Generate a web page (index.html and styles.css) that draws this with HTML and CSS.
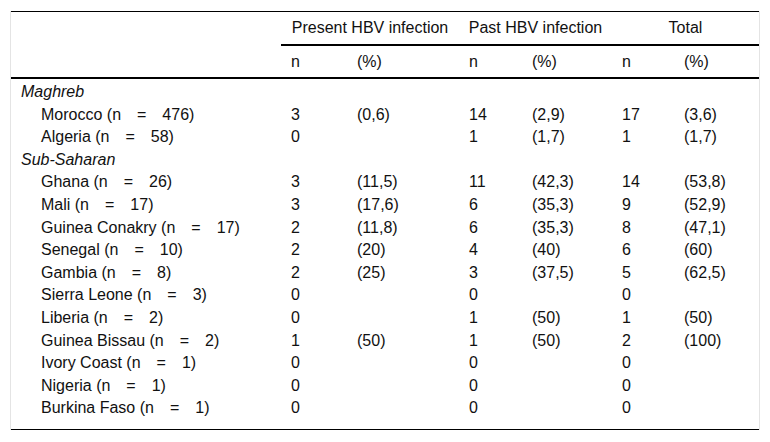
FILE: index.html
```html
<!DOCTYPE html>
<html>
<head>
<meta charset="utf-8">
<link rel="stylesheet" href="styles.css">
</head>
<body>
<div class="wrap">
<table class="tbl">
<colgroup>
<col class="c-label"><col class="c-n1"><col class="c-p1"><col class="c-n2"><col class="c-p2"><col class="c-n3"><col class="c-p3">
</colgroup>
<thead>
<tr class="h1">
<th></th>
<th colspan="2" class="grp">Present HBV infection</th>
<th colspan="2" class="grp">Past HBV infection</th>
<th colspan="2" class="grp">Total</th>
</tr>
<tr class="h2">
<th></th><th>n</th><th>(%)</th><th>n</th><th>(%)</th><th>n</th><th>(%)</th>
</tr>
</thead>
<tbody>
<tr class="first"><td class="region">Maghreb</td><td></td><td></td><td></td><td></td><td></td><td></td></tr>
<tr><td class="country">Morocco (n&emsp;=&emsp;476)</td><td>3</td><td>(0,6)</td><td>14</td><td>(2,9)</td><td>17</td><td>(3,6)</td></tr>
<tr><td class="country">Algeria (n&emsp;=&emsp;58)</td><td>0</td><td></td><td>1</td><td>(1,7)</td><td>1</td><td>(1,7)</td></tr>
<tr><td class="region">Sub-Saharan</td><td></td><td></td><td></td><td></td><td></td><td></td></tr>
<tr><td class="country">Ghana (n&emsp;=&emsp;26)</td><td>3</td><td>(11,5)</td><td>11</td><td>(42,3)</td><td>14</td><td>(53,8)</td></tr>
<tr><td class="country">Mali (n&emsp;=&emsp;17)</td><td>3</td><td>(17,6)</td><td>6</td><td>(35,3)</td><td>9</td><td>(52,9)</td></tr>
<tr><td class="country">Guinea Conakry (n&emsp;=&emsp;17)</td><td>2</td><td>(11,8)</td><td>6</td><td>(35,3)</td><td>8</td><td>(47,1)</td></tr>
<tr><td class="country">Senegal (n&emsp;=&emsp;10)</td><td>2</td><td>(20)</td><td>4</td><td>(40)</td><td>6</td><td>(60)</td></tr>
<tr><td class="country">Gambia (n&emsp;=&emsp;8)</td><td>2</td><td>(25)</td><td>3</td><td>(37,5)</td><td>5</td><td>(62,5)</td></tr>
<tr><td class="country">Sierra Leone (n&emsp;=&emsp;3)</td><td>0</td><td></td><td>0</td><td></td><td>0</td><td></td></tr>
<tr><td class="country">Liberia (n&emsp;=&emsp;2)</td><td>0</td><td></td><td>1</td><td>(50)</td><td>1</td><td>(50)</td></tr>
<tr><td class="country">Guinea Bissau (n&emsp;=&emsp;2)</td><td>1</td><td>(50)</td><td>1</td><td>(50)</td><td>2</td><td>(100)</td></tr>
<tr><td class="country">Ivory Coast (n&emsp;=&emsp;1)</td><td>0</td><td></td><td>0</td><td></td><td>0</td><td></td></tr>
<tr><td class="country">Nigeria (n&emsp;=&emsp;1)</td><td>0</td><td></td><td>0</td><td></td><td>0</td><td></td></tr>
<tr class="last"><td class="country">Burkina Faso (n&emsp;=&emsp;1)</td><td>0</td><td></td><td>0</td><td></td><td>0</td><td></td></tr>
</tbody>
</table>
</div>
</body>
</html>
```

FILE: styles.css
```css
html, body {
  margin: 0;
  padding: 0;
  background: #fff;
}
body {
  font-family: "Liberation Sans", Arial, sans-serif;
  font-size: 16px;
  color: #111;
}
.wrap {
  margin: 11px 0 0 10px;
  width: 748px;
  border-left: 1px solid #e4e4e4;
  border-right: 1px solid #e4e4e4;
}
.tbl {
  width: 748px;
  border-collapse: collapse;
  table-layout: fixed;
  border-top: 1px solid #000;
  border-bottom: 1px solid #000;
}
.c-label { width: 270px; }
.c-n1 { width: 66px; }
.c-p1 { width: 112px; }
.c-n2 { width: 63px; }
.c-p2 { width: 90px; }
.c-n3 { width: 62px; }
.c-p3 { width: 85px; }
.tbl th {
  font-weight: normal;
  text-align: left;
  padding: 0 0 0 10px;
  height: 31px;
  line-height: 18px;
  white-space: nowrap;
}
.tbl .h1 th {
  padding-bottom: 1px;
}
.tbl th.grp {
  text-align: center;
  padding-left: 0;
  border-bottom: 2px solid #000;
}
.tbl .h2 th {
  border-bottom: 2px solid #000;
}
.tbl td {
  padding: 2px 0 2px 10px;
  line-height: 18.6px;
  white-space: nowrap;
}
.tbl tr.first td { padding-top: 4px; }
.tbl tr.last td { padding-bottom: 11px; }
.tbl td.region {
  font-style: italic;
}
.tbl td.country {
  padding-left: 30px;
}
```
